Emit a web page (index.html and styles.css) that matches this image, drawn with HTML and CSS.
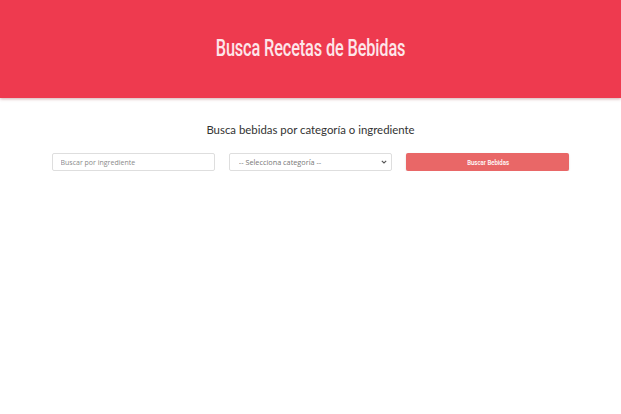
FILE: index.html
```html
<!DOCTYPE html>
<html lang="es">
<head>
<meta charset="utf-8">
<title>Busca Recetas de Bebidas</title>
<link rel="stylesheet" href="styles.css">
</head>
<body>
<header class="hero">
  <h1 class="hero-title">Busca Recetas de Bebidas</h1>
</header>
<main class="main">
  <h2 class="subtitle">Busca bebidas por categoría o ingrediente</h2>
  <form class="search-form">
    <input class="field" type="text" placeholder="Buscar por ingrediente">
    <div class="select-wrap">
      <select class="field select">
        <option>-- Selecciona categoría --</option>
      </select>
      <svg class="chevron" width="6" height="4" viewBox="0 0 6 4" aria-hidden="true"><path d="M0.8 0.8 L3 3 L5.2 0.8" fill="none" stroke="#555" stroke-width="1.1"/></svg>
    </div>
    <button class="btn" type="button"><span class="btn-label">Buscar Bebidas</span></button>
  </form>
</main>
</body>
</html>
```
FILE: styles.css
```css
html, body {
  margin: 0;
  padding: 0;
  background: #fff;
}
body {
  font-family: "Open Sans", "Noto Sans", sans-serif;
  color: #333;
}
.hero {
  height: 98px;
  background: #ee3a4f;
  display: flex;
  align-items: center;
  justify-content: center;
  box-shadow: 0 1px 3px rgba(120, 20, 30, 0.35);
}
.hero-title {
  margin: 0;
  display: inline-block;
  font-family: "Roboto", sans-serif;
  font-weight: 500;
  font-size: 23px;
  color: #fde6ea;
  letter-spacing: -0.2px;
  transform: scaleX(0.71);
  white-space: nowrap;
  padding-bottom: 2px;
}
.main {
  width: 518px;
  margin: 0 auto;
  padding-top: 25px;
}
.subtitle {
  margin: 0 0 16px;
  text-align: center;
  font-family: "Lato", sans-serif;
  font-weight: 400;
  font-size: 11.4px;
  line-height: 14px;
  color: #333;
}
.search-form {
  display: grid;
  grid-template-columns: 1fr 1fr 1fr;
  column-gap: 14px;
}
.field {
  display: block;
  box-sizing: border-box;
  width: 100%;
  height: 18px;
  margin: 0;
  border: 1px solid #dedede;
  border-radius: 2px;
  background: #fff;
  font-family: "Open Sans", sans-serif;
  font-size: 7px;
  color: #777;
  padding: 0 8px;
  outline: none;
}
.field::placeholder {
  color: #8a8a8a;
}
.select-wrap {
  position: relative;
}
.select {
  appearance: none;
  -webkit-appearance: none;
  padding: 0 6px 0 9px;
  font-size: 7.3px;
}
.chevron {
  position: absolute;
  right: 5px;
  top: 7px;
  pointer-events: none;
}
.btn {
  box-sizing: border-box;
  height: 18px;
  margin: 0;
  border: none;
  border-radius: 2px;
  background: #e96767;
  color: #fff;
  padding: 0;
  box-shadow: 0 1px 2px rgba(0,0,0,0.15);
  display: flex;
  align-items: center;
  justify-content: center;
}
.btn-label {
  display: inline-block;
  font-family: "Roboto", sans-serif;
  font-weight: 500;
  font-size: 7.5px;
  transform: scaleX(0.8);
  white-space: nowrap;
}
```
